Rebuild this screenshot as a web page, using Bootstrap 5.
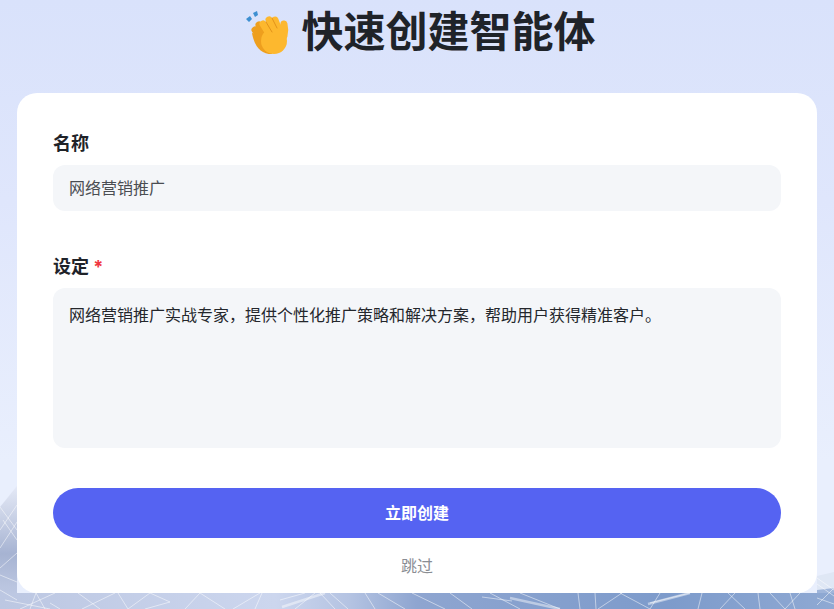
<!DOCTYPE html>
<html lang="zh"><head><meta charset="utf-8"><title>快速创建智能体</title>
<link href="https://cdn.jsdelivr.net/npm/bootstrap@5.3.0/dist/css/bootstrap.min.css" rel="stylesheet">
<style>
html,body{height:100%;overflow:hidden}
body{font-family:"Inter","Noto Sans CJK SC",sans-serif;background:linear-gradient(180deg,#d9e2fb 0,#dfe6fc 200px,#e9effd 460px,#e9effd 100%);color:#1f2329;position:relative}
.mesh-bg{position:absolute;left:0;top:470px;width:834px;height:139px;filter:blur(.6px)}
.page-wrap{position:relative;width:800px;margin:0 auto}
.hero-title{height:93px;padding:0 0 29px 8px;font-size:42px;font-weight:700;line-height:1;color:#1f2329;gap:9px;margin:0}
.form-panel{height:500px;background:#fff;border-radius:20px;padding:36px 36px 15px}
.field-label{font-size:18px;font-weight:700;color:#1f2329;line-height:30px;margin-bottom:6px;display:block}
.req-star{color:#f0353f}
.field-box{background:#f4f6f9;border:0;border-radius:12px;font-size:16px;padding:9px 16px 11px;height:46px;color:#4a4d52;box-shadow:none}
.field-area{height:160px;color:#24272c;padding-top:15px;line-height:25px;resize:none}
.field-box:focus{background:#f4f6f9;box-shadow:none}
.gap-field{margin-bottom:41px}
.go-btn{background:#5563f2;border:0;border-radius:25px;height:50px;color:#fff;font-size:16px;font-weight:700;margin-top:40px;flex:none}
.go-btn:hover{background:#5563f2;color:#fff}
.skip-link{color:#8a8d93;font-size:16px;text-decoration:none;margin-top:16px;line-height:24px}
</style></head>
<body>
<svg class="mesh-bg" viewBox="0 470 834 139" aria-hidden="true">
<defs>
<linearGradient id="mg" x1="0" x2="1" y1="0" y2="0"><stop offset="0" stop-color="#bcc7e2"/><stop offset=".33" stop-color="#ccd6ee"/><stop offset=".42" stop-color="#b4c3e2"/><stop offset=".5" stop-color="#8ea5d0"/><stop offset=".8" stop-color="#7d9bcb"/><stop offset="1" stop-color="#8fa9d3"/></linearGradient>
<linearGradient id="lg" x1="0" x2="0" y1="0" y2="1"><stop offset="0" stop-color="#e4e9f6"/><stop offset=".3" stop-color="#c4cde3"/><stop offset=".55" stop-color="#a6b3d2"/><stop offset=".8" stop-color="#b9c4df"/><stop offset="1" stop-color="#c2cde7"/></linearGradient>
</defs>
<polygon fill="url(#lg)" points="0,507 17,486 17,609 0,609"/>
<polygon fill="#dfe7f5" points="817,576 834,572 834,590 817,594"/>
<polygon fill="#9fb5da" points="817,590 834,588 834,609 817,609"/>
<rect x="0" y="593" width="834" height="16" fill="url(#mg)"/>
<g stroke="#fff" stroke-opacity=".5" stroke-width="1" fill="none">
<path d="M0 530L17 505M0 548L17 522M0 568L17 553M0 575L17 582M0 590L17 600M3 520L17 540M0 507L17 530"/>
<path d="M20 609L55 593M5 600L50 609M30 609L36 593M36 593L45 609M50 603L60 609M78 593L100 609M82 609L115 593M118 593L128 609M128 609L150 593M150 593L170 602M170 602L145 609M185 609L200 593M200 593L225 609M233 609L260 593M262 593L255 609"/>
<path d="M280 600L305 593M295 609L315 593M320 593L335 609M330 593L348 609M365 593L375 609M378 593L405 609M412 593L445 609M450 593L472 609M490 593L520 609M520 593L560 609M482 597L512 601"/>
<path d="M578 593L580 609M595 593L596 609M598 609L622 593M620 593L650 609M650 603L690 593M650 609L660 593M698 609L702 593M720 609L735 593M728 593L745 609M758 593L760 609M770 593L785 609M785 609L800 593M795 609L790 593M817 578L834 590M817 584L834 596M817 598L834 604M817 605L834 588"/>
</g>
<path d="M648 604L690 593M282 607L325 593M510 598L560 609" stroke="#fff" stroke-opacity=".45" stroke-width="2.5" fill="none"/>
</svg>
<div class="page-wrap">
<h1 class="hero-title d-flex align-items-center justify-content-center">
<svg width="46" height="46" viewBox="0 0 46 46" aria-hidden="true">
<path d="M0 10l4-3 2 3-3 3zM7 4l4-2 1 4-3 2z" fill="#3d8fd1"/>
<g stroke="#ee9f1e" stroke-width="7" stroke-linecap="round"><path d="M9 21l9 12M13 16l9 13"/></g>
<path d="M6 24C8 36 14 45 26 45L28 28z" fill="#ee9f1e"/>
<g stroke="#fdb82e" stroke-width="7" stroke-linecap="round"><path d="M17 15l8 13M23 11l7 14M29 11l5 13M38 15c1 4 1 8 0 12"/></g>
<ellipse cx="28" cy="32" rx="13" ry="13" fill="#fdb82e"/>
<path d="M20 13l6 10M26 9l5 10" stroke="#e2931a" stroke-width="1" stroke-linecap="round" fill="none"/>
</svg>
<span>快速创建智能体</span></h1>
<form class="form-panel d-flex flex-column">
<div class="gap-field"><label class="field-label" for="n">名称</label>
<input id="n" class="form-control field-box" value="网络营销推广"></div>
<div><label class="field-label" for="s">设定 <span class="req-star">*</span></label>
<textarea id="s" class="form-control field-box field-area">网络营销推广实战专家，提供个性化推广策略和解决方案，帮助用户获得精准客户。</textarea></div>
<button type="button" class="btn go-btn w-100">立即创建</button>
<a href="#" class="skip-link text-center">跳过</a>
</form>
</div>
<script src="https://cdn.jsdelivr.net/npm/bootstrap@5.3.0/dist/js/bootstrap.bundle.min.js"></script>
</body></html>
